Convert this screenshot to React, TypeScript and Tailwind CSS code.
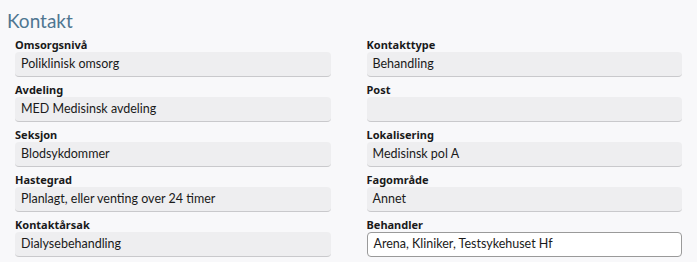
const left = [
  { label: 'Omsorgsnivå', value: 'Poliklinisk omsorg' },
  { label: 'Avdeling', value: 'MED Medisinsk avdeling' },
  { label: 'Seksjon', value: 'Blodsykdommer' },
  { label: 'Hastegrad', value: 'Planlagt, eller venting over 24 timer' },
  { label: 'Kontaktårsak', value: 'Dialysebehandling' },
];

const right = [
  { label: 'Kontakttype', value: 'Behandling' },
  { label: 'Post', value: '' },
  { label: 'Lokalisering', value: 'Medisinsk pol A' },
  { label: 'Fagområde', value: 'Annet' },
  { label: 'Behandler', value: 'Arena, Kliniker, Testsykehuset Hf', editable: true },
];

type FieldProps = { label: string; value: string; editable?: boolean };

function Field({ label, value, editable }: FieldProps) {
  return (
    <div className="flex flex-col">
      <div className="h-[20px] flex items-end pb-[2px] text-[11px] font-bold text-[#1a1a1a] leading-none">
        {label}
      </div>
      {editable ? (
        <div
          className="h-[25px] flex items-center px-[6px] text-[12.5px] text-[#1a1a1a] bg-white border border-[#9a9a9a] rounded-[4px]"
          style={{ fontFamily: 'Lato, "Noto Sans", sans-serif' }}
        >
          {value}
        </div>
      ) : (
        <div
          className="h-[25px] flex items-center px-[6px] text-[12.5px] text-[#1a1a1a] bg-[#eeeef0] border-b border-[#c9c9cc] rounded-[4px]"
          style={{ fontFamily: 'Lato, "Noto Sans", sans-serif' }}
        >
          {value}
        </div>
      )}
    </div>
  );
}

export default function App() {
  return (
    <div
      className="w-[697px] h-[262px] bg-[#f8f8fa] overflow-hidden"
      style={{ fontFamily: '"Noto Sans", "Open Sans", sans-serif' }}
    >
      <h2
        className="h-[32px] pl-[7px] pt-[10px] text-[19px] leading-[22px] text-[#4f7691]"
        style={{ fontFamily: 'Lato, "Noto Sans", sans-serif' }}
      >
        Kontakt
      </h2>
      <div className="grid grid-cols-2 gap-x-[36px] px-[15px]">
        <div className="flex flex-col">
          {left.map((f) => (
            <Field key={f.label} {...f} />
          ))}
        </div>
        <div className="flex flex-col">
          {right.map((f) => (
            <Field key={f.label} {...f} />
          ))}
        </div>
      </div>
    </div>
  );
}
